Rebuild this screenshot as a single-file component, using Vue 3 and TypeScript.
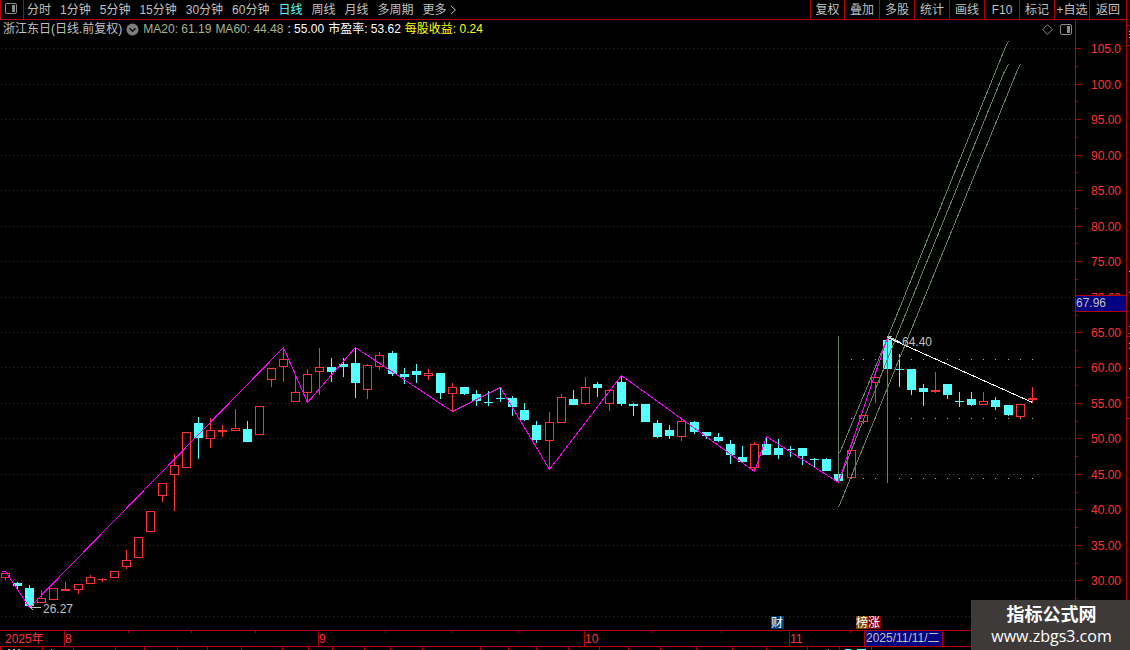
<script setup lang="ts">
import { ref } from 'vue'

type Kind = 'up' | 'down'
interface Candle {
  x: number
  high: number
  top: number
  bottom: number
  low: number
  kind: Kind
}

const periods = ['分时', '1分钟', '5分钟', '15分钟', '30分钟', '60分钟', '日线', '周线', '月线', '多周期']
const activePeriod = ref('日线')
const tools = ['复权', '叠加', '多股', '统计', '画线', 'F10', '标记', '+自选', '返回']

const priceRows = [
  { label: '105.0', y: 48 },
  { label: '100.0', y: 84 },
  { label: '95.00', y: 119 },
  { label: '90.00', y: 155 },
  { label: '85.00', y: 190 },
  { label: '80.00', y: 226 },
  { label: '75.00', y: 261 },
  { label: '70.00', y: 297 },
  { label: '65.00', y: 332 },
  { label: '60.00', y: 367 },
  { label: '55.00', y: 403 },
  { label: '50.00', y: 438 },
  { label: '45.00', y: 474 },
  { label: '40.00', y: 509 },
  { label: '35.00', y: 545 },
  { label: '30.00', y: 580 },
]
const gridRows = [...priceRows.map((r) => r.y), 616]
const minorTicks = [66, 101, 137, 172, 208, 243, 279, 315, 350, 385, 421, 456, 492, 527, 563, 598]

// x, high, body top, body bottom, low, rising (1) or falling (0)
const rows: number[][] = [
  [5, 573, 573, 577, 579, 1], [17, 582, 583, 585, 588, 0], [29, 585, 588, 605, 606, 0],
  [41, 590, 598, 602, 602, 1], [53, 588, 588, 599, 599, 1], [65, 582, 589, 590, 590, 1],
  [78, 584, 584, 589, 593, 1], [90, 575, 577, 583, 583, 1], [102, 578, 579, 579, 581, 1],
  [114, 571, 571, 577, 577, 1], [126, 550, 560, 566, 568, 1], [138, 537, 537, 557, 557, 1],
  [150, 511, 511, 531, 531, 1], [162, 483, 483, 495, 501, 1], [174, 454, 465, 474, 510, 1],
  [186, 432, 432, 467, 467, 1], [198, 417, 423, 437, 458, 0], [210, 418, 430, 438, 447, 1],
  [222, 425, 430, 431, 436, 1], [235, 409, 428, 430, 430, 1], [247, 421, 429, 441, 441, 0],
  [259, 406, 406, 434, 434, 1], [271, 368, 368, 379, 386, 1], [283, 347, 359, 366, 381, 1],
  [295, 374, 392, 401, 401, 1], [307, 369, 374, 392, 401, 1], [319, 348, 367, 371, 394, 1],
  [331, 358, 367, 371, 381, 0], [343, 358, 364, 366, 376, 0], [355, 347, 363, 382, 397, 0],
  [367, 364, 365, 389, 398, 1], [379, 352, 355, 366, 369, 1], [392, 351, 353, 373, 375, 0],
  [404, 368, 374, 376, 383, 0], [416, 364, 371, 374, 382, 0], [428, 369, 373, 375, 379, 1],
  [440, 373, 373, 392, 398, 0], [452, 383, 387, 393, 411, 1], [464, 387, 387, 393, 394, 0],
  [476, 390, 394, 400, 405, 0], [488, 391, 402, 402, 405, 0], [500, 387, 398, 398, 401, 0],
  [512, 396, 398, 406, 415, 0], [524, 403, 410, 419, 420, 0], [536, 421, 425, 439, 442, 0],
  [549, 412, 422, 440, 469, 1], [561, 394, 397, 422, 422, 1], [573, 390, 399, 404, 404, 0],
  [585, 377, 387, 403, 404, 1], [597, 382, 384, 387, 396, 0], [609, 390, 390, 403, 410, 1],
  [621, 375, 382, 403, 405, 0], [633, 403, 404, 405, 415, 0], [645, 404, 404, 421, 421, 0],
  [657, 420, 423, 436, 437, 0], [669, 425, 430, 435, 438, 0], [681, 419, 421, 436, 440, 1],
  [694, 421, 422, 431, 433, 0], [706, 432, 432, 435, 438, 0], [718, 433, 437, 440, 441, 0],
  [730, 440, 444, 454, 463, 0], [742, 446, 457, 461, 462, 0], [754, 442, 444, 467, 471, 1],
  [766, 436, 444, 454, 454, 0], [778, 439, 448, 454, 458, 0], [790, 446, 449, 449, 456, 0],
  [802, 448, 448, 455, 464, 0], [814, 458, 459, 459, 466, 0], [826, 458, 459, 470, 470, 0],
  [838, 474, 474, 480, 482, 0], [851, 450, 450, 477, 477, 1], [863, 415, 415, 421, 423, 1],
  [875, 377, 377, 382, 402, 1], [887, 340, 340, 368, 368, 0], [899, 354, 369, 369, 386, 0],
  [911, 369, 369, 389, 394, 0], [923, 384, 388, 391, 405, 0], [935, 372, 390, 391, 392, 1],
  [947, 384, 384, 394, 398, 0], [959, 392, 401, 401, 406, 0], [971, 392, 399, 404, 405, 0],
  [983, 392, 401, 404, 404, 1], [995, 397, 400, 406, 409, 0], [1008, 405, 405, 414, 415, 0],
  [1020, 404, 404, 416, 417, 1], [1032, 387, 398, 399, 402, 1],
]
const candles: Candle[] = rows.map(([x, high, top, bottom, low, up]) => ({
  x, high, top, bottom, low, kind: up ? 'up' : 'down',
}))
const isHollow = (c: Candle) => c.kind === 'up' && c.bottom - c.top > 1
const levelDots = candles.filter((c) => c.x >= 851).map((c) => c.x)
const levels = [359, 418, 478]

const toPoints = (pts: number[][]) => pts.map(([x, y]) => `${x + 0.5},${y + 0.5}`).join(' ')
const zigzag = toPoints([
  [1, 571], [5, 571], [29, 607], [283, 347], [307, 402], [355, 347], [452, 411], [500, 387],
  [549, 469], [621, 375], [754, 471], [766, 436], [838, 482], [887, 337],
])
const channels = [
  toPoints([[839, 453], [888, 335], [1006, 44], [1008, 41]]),
  toPoints([[838, 482], [896, 336], [1003, 73], [1008, 64]]),
  toPoints([[838, 507], [908, 336], [1018, 67], [1020, 64]]),
]

const months = [
  { x: 64, label: '8' },
  { x: 318, label: '9' },
  { x: 584, label: '10' },
  { x: 789, label: '11' },
]
const weekTicks = [128, 191, 255, 385, 451, 518, 652, 721, 850]
const footTicks = [
  0, 42, 73, 115, 144, 177, 207, 241, 282, 308, 332, 364, 390, 422, 480, 508, 536, 568, 599, 628,
  660, 696, 732, 766, 807, 839, 871,
]
const sideRules = [25, 45, 336, 397, 418]
const sideMarks = [31, 34, 37, 271, 292, 326, 333, 343, 348, 368]

const events = [
  { x: 771, label: '财', tone: 'navy' },
  { x: 856, label: '榜', tone: 'brown' },
  { x: 868, label: '涨', tone: 'maroon' },
]
</script>

<template>
  <main class="terminal">
    <header class="toolbar">
      <button class="layout-btn" type="button" aria-label="布局">
        <svg width="12" height="12" viewBox="0 0 12 12">
          <rect x="0.5" y="0.5" width="11" height="10" rx="1.5" fill="none" stroke="#8c8c8c" />
          <rect x="7" y="2" width="3" height="7" fill="#8c8c8c" />
        </svg>
      </button>
      <nav class="periods">
        <button
          v-for="p in periods"
          :key="p"
          type="button"
          :class="{ active: p === activePeriod }"
          @click="activePeriod = p"
        >{{ p }}</button>
        <button type="button" class="more">
          更多
          <svg width="7" height="10" viewBox="0 0 7 10">
            <path d="M1 1 L5.5 5 L1 9" fill="none" stroke="#c0c0c0" />
          </svg>
        </button>
      </nav>
      <div class="tools">
        <button v-for="t in tools" :key="t" type="button">{{ t }}</button>
      </div>
    </header>

    <section class="panel">
      <div class="legend">
        <span class="name">浙江东日(日线.前复权)</span>
        <button class="drop" type="button" aria-label="展开">
          <svg width="13" height="13" viewBox="0 0 13 13">
            <circle cx="6.5" cy="6.5" r="6" fill="#7c7c7c" />
            <path d="M3.5 5.2 L6.5 8.2 L9.5 5.2" fill="none" stroke="#111" stroke-width="1.5" />
          </svg>
        </button>
        <span class="ma">MA20: 61.19</span>
        <span class="ma">MA60: 44.48</span>
        <span class="white">: 55.00</span>
        <span class="white">市盈率: 53.62</span>
        <span class="yellow">每股收益: 0.24</span>
        <span class="legend-tools">
          <button type="button" aria-label="标注">
            <svg width="11" height="11" viewBox="0 0 11 11">
              <path d="M5.5 0.7 L10.3 5.5 L5.5 10.3 L0.7 5.5 Z" fill="none" stroke="#8c8c8c" />
            </svg>
          </button>
          <button type="button" aria-label="侧栏">
            <svg width="12" height="11" viewBox="0 0 12 11">
              <rect x="0.5" y="0.5" width="11" height="10" rx="1.5" fill="none" stroke="#8c8c8c" />
              <rect x="7" y="2" width="3" height="7" fill="#8c8c8c" />
            </svg>
          </button>
        </span>
      </div>

      <svg class="chart" viewBox="0 20 1130 630" role="img" aria-label="日线K线图">
        <g class="crisp">
          <line
            v-for="y in gridRows" :key="'g' + y" class="grid"
            x1="1" x2="1075" :y1="y + 0.5" :y2="y + 0.5"
          />

          <g v-for="c in candles" :key="c.x" :class="c.kind">
            <rect v-if="c.top > c.high" class="solid" :x="c.x" :y="c.high" width="1" :height="c.top - c.high" />
            <rect v-if="c.low > c.bottom" class="solid" :x="c.x" :y="c.bottom + 1" width="1" :height="c.low - c.bottom" />
            <rect
              v-if="isHollow(c)" class="hollow"
              :x="c.x - 3.5" :y="c.top + 0.5" width="8" :height="c.bottom - c.top"
            />
            <rect v-else class="solid" :x="c.x - 4" :y="c.top" width="9" :height="c.bottom - c.top + 1" />
          </g>

          <g class="level">
            <template v-for="y in levels" :key="y">
              <rect v-for="x in levelDots" :key="x" :x="x" :y="y" width="1" height="1" />
            </template>
          </g>

          <g class="channel">
            <line x1="838.5" x2="838.5" y1="336" y2="483" />
            <line x1="887.5" x2="887.5" y1="336" y2="483" />
            <polyline v-for="p in channels" :key="p" :points="p" />
          </g>
          <polyline class="zigzag" :points="zigzag" />
          <line class="trend" x1="887.5" y1="337.5" x2="1032.5" y2="402.5" />

          <path class="pointer" d="M30 607.5 H41 M33.5 604 L30.5 607.5 L33.5 610.5" />
          <path class="pointer" d="M888 336.5 L901 342.5 M891.5 336.5 H887.5 L889.5 341" />
        </g>
        <text class="note" x="43" y="613">26.27</text>
        <text class="note" x="902" y="346">64.40</text>

        <g class="rule crisp">
          <rect x="1075" y="20" width="1" height="611" />
          <rect x="1126" y="20" width="1" height="630" />
          <rect v-for="r in priceRows" :key="r.y" x="1076" :y="r.y" width="5" height="1" />
          <rect v-for="y in minorTicks" :key="y" x="1076" :y="y" width="2" height="1" />
          <rect v-for="y in sideRules" :key="'s' + y" x="1127" :y="y" width="3" height="1" />
          <rect x="0" y="630" width="1127" height="1" />
          <rect x="0" y="646" width="1127" height="1" />
          <rect v-for="m in months" :key="m.x" :x="m.x" y="631" width="1" height="15" />
          <rect v-for="x in weekTicks" :key="x" :x="x" y="631" width="1" height="2" />
          <rect v-for="x in footTicks" :key="'f' + x" :x="x" y="647" width="1" height="3" />
        </g>
        <g class="crisp" fill="#c0c0c0">
          <rect v-for="y in sideMarks" :key="y" x="1129" :y="y" width="1" height="1" />
          <rect x="8" y="649" width="2" height="1" />
          <rect x="13" y="649" width="2" height="1" />
          <rect x="18" y="649" width="2" height="1" />
          <rect x="51" y="649" width="1" height="1" />
          <rect x="828" y="649" width="1" height="1" />
        </g>
        <g class="crisp" fill="#54ffff">
          <rect x="845" y="649" width="6" height="1" />
          <rect x="857" y="649" width="9" height="1" />
        </g>

        <text v-for="r in priceRows" :key="r.label" class="price" x="1121" :y="r.y + 5">{{ r.label }}</text>
        <rect class="cursor-box crisp" x="1075.5" y="295.5" width="51" height="16" />
        <text class="note" x="1076" y="307">67.96</text>

        <text class="date" x="5" y="643">2025年</text>
        <text v-for="m in months" :key="m.label" class="date" :x="m.x + 1" y="643">{{ m.label }}</text>
        <rect class="cursor-box crisp" x="864.5" y="630.5" width="78" height="16" />
        <text class="note" x="866" y="642">2025/11/11/二</text>

        <g v-for="e in events" :key="e.label">
          <rect :class="e.tone" :x="e.x" y="616" width="13" height="13" />
          <text class="event" :x="e.x" y="627">{{ e.label }}</text>
        </g>
      </svg>
    </section>

    <aside class="watermark">
      <strong>指标公式网</strong>
      <span>www.zbgs3.com</span>
    </aside>
  </main>
</template>

<style>
body {
  margin: 0;
  background: #000;
}
</style>

<style scoped>
.terminal {
  position: relative;
  overflow: hidden;
  background: #000;
  color: #c0c0c0;
  font-family: "Liberation Sans", "Noto Sans CJK SC", sans-serif;
  font-size: 12px;
  line-height: 18px;
}
button {
  margin: 0;
  padding: 0;
  border: 0;
  background: none;
  color: inherit;
  font: inherit;
  white-space: nowrap;
  cursor: pointer;
}
.toolbar {
  display: flex;
  box-sizing: border-box;
  height: 20px;
  margin-right: 3px;
  border: solid #b40000;
  border-width: 0 1px 1px;
}
.layout-btn {
  display: flex;
  width: 23px;
  padding: 3px 0 0 4px;
  box-sizing: border-box;
  border-right: 1px solid #b40000;
}
.periods {
  display: flex;
  flex: 1;
  gap: 9px;
  padding-left: 3px;
}
.periods .active {
  color: #54ffff;
}
.more {
  display: flex;
  align-items: center;
  gap: 3px;
}
.tools {
  display: flex;
}
.tools button {
  box-sizing: border-box;
  width: 35px;
  border-left: 1px solid #b40000;
}
.tools button:first-child {
  width: 34px;
}
.tools button:last-child {
  width: 37px;
}
.panel {
  position: relative;
}
.legend {
  position: absolute;
  top: 0;
  left: 0;
  right: 58px;
  display: flex;
  align-items: center;
  gap: 4px;
  height: 18px;
  padding-left: 3px;
  white-space: nowrap;
}
.legend button,
.legend-tools {
  display: flex;
}
.legend-tools {
  gap: 7px;
  margin-left: auto;
}
.ma {
  color: #a4b48c;
}
.white {
  color: #fff;
}
.yellow {
  color: #ff0;
}
.chart {
  display: block;
  width: 100%;
  height: auto;
}
.crisp {
  shape-rendering: crispEdges;
}
.grid {
  stroke: #a00000;
  stroke-dasharray: 1 3;
}
.rule {
  fill: #b40000;
}
.up .solid {
  fill: #ff3232;
}
.up .hollow {
  fill: none;
  stroke: #ff3232;
}
.down .solid {
  fill: #54ffff;
}
.level {
  fill: #a4b48c;
}
.channel {
  fill: none;
  stroke: #648264;
}
.zigzag {
  fill: none;
  stroke: #f0f;
}
.trend {
  stroke: #fff;
}
.pointer {
  fill: none;
  stroke: #c0c0c0;
}
.note {
  fill: #c0c0c0;
}
.price {
  fill: #ff3232;
  text-anchor: end;
}
.date {
  fill: #ff3232;
}
.event {
  fill: #fff;
}
.cursor-box {
  fill: #000080;
  stroke: #b40000;
}
.navy {
  fill: #003c78;
}
.brown {
  fill: #804000;
}
.maroon {
  fill: #800000;
}
.watermark {
  position: absolute;
  right: 0;
  bottom: 0;
  display: flex;
  flex-direction: column;
  align-items: center;
  box-sizing: border-box;
  width: 159px;
  height: 50px;
  padding: 5px 0 0 2px;
  background: #3e3a3a;
  color: #fff;
}
.watermark strong {
  font-size: 18px;
  line-height: 21px;
}
.watermark span {
  font-family: "Open Sans", "Noto Sans", sans-serif;
  font-size: 16px;
  line-height: 20px;
}
</style>
